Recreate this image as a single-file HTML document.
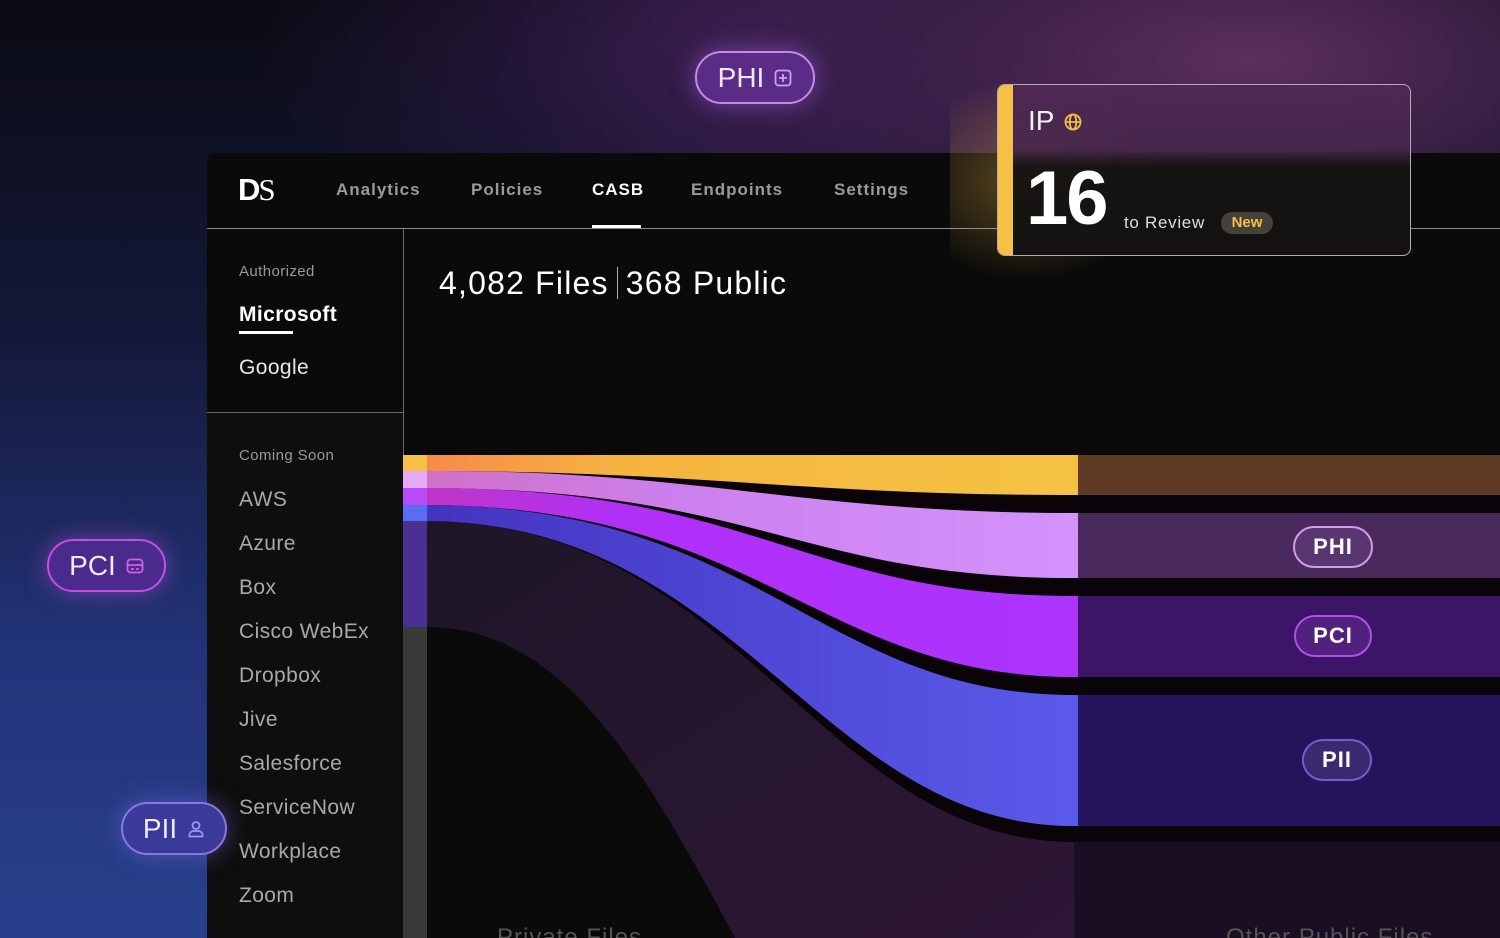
<!DOCTYPE html>
<html><head><meta charset="utf-8"><style>
*{margin:0;padding:0;box-sizing:border-box}
body{width:1500px;height:938px;overflow:hidden;position:relative;font-family:"Liberation Sans",sans-serif;
background:
radial-gradient(ellipse 750px 320px at 1250px 60px,#5c2f5e 0%,rgba(70,35,80,.6) 45%,rgba(0,0,0,0) 100%),
radial-gradient(ellipse 500px 250px at 760px 40px,rgba(70,35,100,.7),rgba(0,0,0,0) 100%),
linear-gradient(180deg,#0b0b14 0%,#141838 35%,#22347a 70%,#28408c 100%);}
.abs{position:absolute}
#panel{left:207px;top:153px;width:1293px;height:785px;background:#0a0a0a;border-top-left-radius:8px}
.nav{position:absolute;top:180px;font-size:17px;font-weight:bold;color:#9a9a9a;letter-spacing:1px}
.side{position:absolute;left:239px;font-size:21px;color:#a8a8a8;letter-spacing:.4px}
.pill{position:absolute;border-radius:30px;color:#f0e8ff;display:flex;align-items:center;justify-content:center;gap:10px;font-size:28px}
.rp{position:absolute;border-radius:24px;color:#fff;font-weight:bold;font-size:22px;display:flex;align-items:center;justify-content:center;letter-spacing:1px}
</style></head><body>
<div id="panel" class="abs"></div>
<!-- nav -->
<div class="abs" style="left:238px;top:172px;font-size:31px;font-weight:bold;color:#fff;letter-spacing:-2px">D<span style="font-family:'Liberation Serif',serif;font-weight:normal">S</span></div>
<div class="nav" style="left:336px">Analytics</div>
<div class="nav" style="left:471px">Policies</div>
<div class="nav" style="left:592px;color:#fff">CASB</div>
<div class="abs" style="left:592px;top:225px;width:49px;height:3px;background:#fff"></div>
<div class="nav" style="left:691px">Endpoints</div>
<div class="nav" style="left:834px">Settings</div>
<div class="abs" style="left:207px;top:228px;width:1293px;height:1px;background:#8a8a8a"></div>
<div class="abs" style="left:403px;top:229px;width:1px;height:709px;background:#6a6a6a"></div>
<div class="abs" style="left:207px;top:412px;width:196px;height:1px;background:#6a6a6a"></div>
<div class="abs" style="left:207px;top:413px;width:196px;height:525px;background:#0e0e0e"></div>
<!-- sidebar -->
<div class="side" style="top:263px;font-size:15px;color:#999">Authorized</div>
<div class="side" style="top:303px;color:#fff;font-weight:bold">Microsoft</div>
<div class="abs" style="left:239px;top:331px;width:54px;height:3px;background:#fff"></div>
<div class="side" style="top:356px;color:#e8e8e8">Google</div>
<div class="side" style="top:447px;font-size:15px;color:#999">Coming Soon</div>
<div class="side" style="top:488px">AWS</div>
<div class="side" style="top:532px">Azure</div>
<div class="side" style="top:576px">Box</div>
<div class="side" style="top:620px">Cisco WebEx</div>
<div class="side" style="top:664px">Dropbox</div>
<div class="side" style="top:708px">Jive</div>
<div class="side" style="top:752px">Salesforce</div>
<div class="side" style="top:796px">ServiceNow</div>
<div class="side" style="top:840px">Workplace</div>
<div class="side" style="top:884px">Zoom</div>
<div class="abs" style="left:439px;top:265px;font-size:32px;color:#fff;letter-spacing:1.2px">4,082 Files<span style="display:inline-block;width:1px;height:32px;background:#aaa;margin:0 8px;vertical-align:-5px"></span>368 Public</div>
<!-- sankey -->
<svg class="abs" style="left:0;top:0" width="1500" height="938">
<defs>
<linearGradient id="gy" x1="0" x2="1"><stop offset="0" stop-color="#f78a4a"/><stop offset=".3" stop-color="#f5b440"/><stop offset="1" stop-color="#f5c343"/></linearGradient>
<linearGradient id="gp" x1="0" x2="1"><stop offset="0" stop-color="#d070c8"/><stop offset=".4" stop-color="#cc80ee"/><stop offset="1" stop-color="#d392fc"/></linearGradient>
<linearGradient id="gv" x1="0" x2="1"><stop offset="0" stop-color="#c035c8"/><stop offset=".3" stop-color="#b030f8"/><stop offset="1" stop-color="#ad33ff"/></linearGradient>
<linearGradient id="gb" x1="0" x2="1"><stop offset="0" stop-color="#4433c0"/><stop offset="1" stop-color="#5a5aea"/></linearGradient>
<linearGradient id="gd" x1="0" x2="1" y1="0" y2="1"><stop offset="0" stop-color="#1e1628"/><stop offset="1" stop-color="#2e1636"/></linearGradient>
</defs>
<rect x="427" y="521" width="647" height="417" fill="url(#gd)"/>
<path d="M427,627 C560,627 640,760 735,938 L427,938 Z" fill="#0a0a0a"/>
<rect x="1074" y="455" width="426" height="40" fill="#5e3a24"/>
<rect x="1074" y="495" width="426" height="18" fill="#0a050a"/>
<rect x="1074" y="513" width="426" height="65" fill="#4a2a5c"/>
<rect x="1074" y="578" width="426" height="18" fill="#0a050a"/>
<rect x="1074" y="596" width="426" height="81" fill="#3c1468"/>
<rect x="1074" y="677" width="426" height="18" fill="#0a050a"/>
<rect x="1074" y="695" width="426" height="131" fill="#25145c"/>
<rect x="1074" y="826" width="426" height="16" fill="#0a050a"/>
<rect x="1074" y="842" width="426" height="96" fill="#190e22"/>
<path d="M427,471 C700,471 800,513 1074,513 L1074,495 C800,495 700,471 427,471Z" fill="#0a0408"/>
<path d="M427,488 C760,488 800,596 1074,596 L1074,578 C800,578 760,488 427,488Z" fill="#0a0408"/>
<path d="M427,505 C760,505 820,695 1074,695 L1074,677 C820,677 760,505 427,505Z" fill="#0a0408"/>
<path d="M427,521 C740,521 820,842 1074,842 L1074,826 C820,826 740,521 427,521Z" fill="#0a0408"/>
<path d="M427,455 L1074,455 L1074,495 C800,495 700,471 427,471Z" fill="url(#gy)"/>
<path d="M427,471 C700,470 800,513 1074,513 L1074,578 C800,578 760,489 427,488Z" fill="url(#gp)"/>
<path d="M427,488 C760,488 800,596 1074,596 L1074,677 C820,677 760,506 427,505Z" fill="url(#gv)"/>
<path d="M427,505 C760,506 820,695 1074,695 L1074,826 C820,826 740,522 427,521Z" fill="url(#gb)"/>
<rect x="403" y="455" width="24" height="16" fill="#f5c043"/>
<rect x="403" y="471" width="24" height="17" fill="#e4aaf5"/>
<rect x="403" y="488" width="24" height="17" fill="#b84af7"/>
<rect x="403" y="505" width="24" height="16" fill="#5a6cf2"/>
<rect x="403" y="521" width="24" height="106" fill="#4a3090"/>
<rect x="403" y="627" width="24" height="311" fill="#3a3a3a"/>
<rect x="1074" y="455" width="4" height="40" fill="#f5c043"/>
<rect x="1074" y="513" width="4" height="65" fill="#d392fc"/>
<rect x="1074" y="596" width="4" height="81" fill="#ad33ff"/>
<rect x="1074" y="695" width="4" height="131" fill="#5a5aea"/>
<text x="497" y="945" fill="#555" font-size="24" letter-spacing="1" font-family="Liberation Sans">Private Files</text>
<text x="1226" y="945" fill="#555" font-size="24" letter-spacing="1" font-family="Liberation Sans">Other Public Files</text>
</svg>
<div class="rp" style="left:1293px;top:526px;width:80px;height:42px;border:2px solid #d49af0;background:#5a3670">PHI</div>
<div class="rp" style="left:1294px;top:615px;width:78px;height:42px;border:2px solid #b050e8;background:#52207e">PCI</div>
<div class="rp" style="left:1302px;top:739px;width:70px;height:42px;border:2px solid #7a5ac8;background:#3a2a72">PII</div>
<!-- IP card -->
<div class="abs" style="left:950px;top:70px;width:220px;height:220px;background:radial-gradient(ellipse at 35% 50%,rgba(245,190,70,.35),rgba(0,0,0,0) 65%)"></div>
<div class="abs" style="left:997px;top:84px;width:414px;height:172px;border:1.5px solid #b8a8b8;border-radius:8px;overflow:hidden;background:linear-gradient(180deg,rgba(80,40,85,.9) 0%,rgba(70,38,75,.9) 38%,rgba(22,20,18,.97) 48%,#141210 100%)">
<div class="abs" style="left:0;top:0;width:15px;height:172px;background:#f5c043"></div>
<div class="abs" style="left:30px;top:20px;font-size:28px;color:#f0f0f0">IP</div>
<svg class="abs" style="left:66px;top:28px" width="18" height="18" viewBox="0 0 18 18" fill="none" stroke="#f5c043" stroke-width="1.8"><circle cx="9" cy="9" r="7.5"/><ellipse cx="9" cy="9" rx="3.3" ry="7.5"/><line x1="1.5" y1="9" x2="16.5" y2="9"/></svg>
<div class="abs" style="left:28px;top:70px;font-size:76px;font-weight:bold;color:#fff;letter-spacing:-2px">16</div>
<div class="abs" style="left:126px;top:128px;font-size:17px;color:#ddd;letter-spacing:.7px">to Review</div>
<div class="abs" style="left:223px;top:127px;width:52px;height:22px;border-radius:11px;background:#44403a;color:#f5c043;font-size:15px;font-weight:bold;text-align:center;line-height:22px">New</div>
</div>
<!-- floating pills -->
<div class="pill" style="left:695px;top:51px;width:120px;height:53px;border:2px solid #c48ae8;background:#5a2c86;box-shadow:0 0 24px rgba(160,90,230,.6)">PHI
<svg width="18" height="18" viewBox="0 0 18 18" fill="none" stroke="#d0a0f8" stroke-width="1.8"><rect x="1.5" y="1.5" width="15" height="15" rx="3"/><path d="M9 5v8M5 9h8"/></svg></div>
<div class="pill" style="left:47px;top:539px;width:119px;height:53px;border:2px solid #c050e0;background:#4a2a8a;box-shadow:0 0 24px rgba(200,80,230,.5)">PCI
<svg width="18" height="16" viewBox="0 0 18 16" fill="none" stroke="#d060e8" stroke-width="1.8"><rect x="1.5" y="1.5" width="15" height="13" rx="3"/><path d="M1.5 7h15M5 11h3M10 11h3"/></svg></div>
<div class="pill" style="left:121px;top:802px;width:106px;height:53px;border:2px solid #8a78e0;background:#3a3a98;box-shadow:0 0 24px rgba(120,110,230,.5)">PII
<svg width="18" height="18" viewBox="0 0 18 18" fill="none" stroke="#9a9af0" stroke-width="1.8"><circle cx="9" cy="5.5" r="3.5"/><path d="M2.5 16.5v-1.5a4 4 0 0 1 4-4h5a4 4 0 0 1 4 4v1.5z"/></svg></div>
</body></html>
